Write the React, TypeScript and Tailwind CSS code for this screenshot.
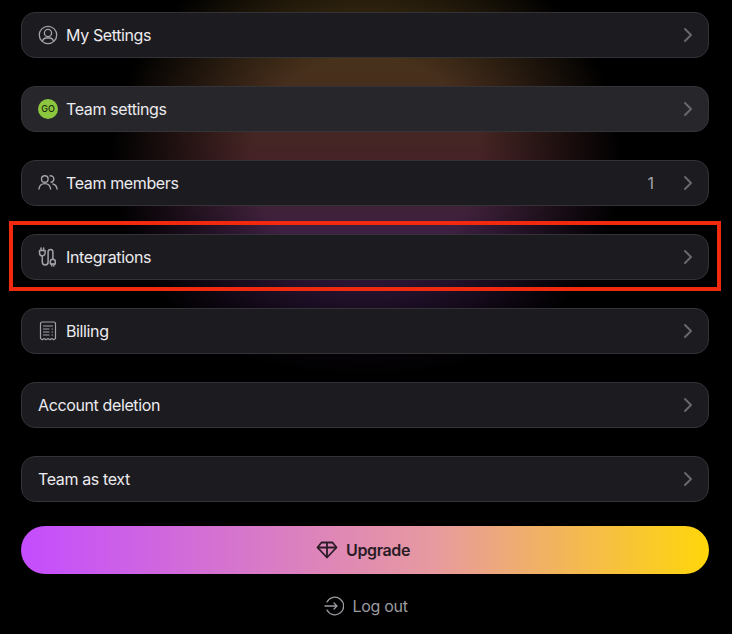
import type { ReactNode } from 'react';
import { ChevronRight } from 'lucide-react';

function UserIcon() {
  return (
    <svg width="20" height="20" viewBox="0 0 20 20" fill="none" stroke="currentColor" strokeWidth="1.3">
      <circle cx="10" cy="10" r="8.700" />
      <circle cx="10" cy="8" r="3.600" />
      <path d="M4.600 16.200c.5-2.200 2-3.200 3.400-3.200h4c1.400 0 2.900 1 3.400 3.200" />
    </svg>
  );
}

function MembersIcon() {
  return (
    <svg width="20" height="20" viewBox="0 0 20 20" fill="none" stroke="currentColor" strokeWidth="1.4" strokeLinecap="round">
      <circle cx="6.800" cy="6" r="3.300" />
      <path d="M1 16c.3-3.400 2.500-5.400 5.800-5.400s5.500 2 5.800 5.400" />
      <path d="M12 2.900c2-.4 3.800 1 3.800 3.100 0 1.700-1 2.900-2.600 3.300" />
      <path d="M14.800 11c2.400.5 3.900 2.300 4.200 5" />
    </svg>
  );
}

function PlugIcon() {
  return (
    <svg width="20" height="20" viewBox="0 0 20 20" fill="none" stroke="currentColor" strokeWidth="1.500" strokeLinecap="round" strokeLinejoin="round">
      <path d="M1.500 3.500v2.500a2.800 2.800 0 0 0 5.600 0V3.500z" />
      <path d="M3 1v2.500M5.600 1v2.500" />
      <path d="M4.300 9v6a2.900 2.900 0 0 0 5.800 0V4.800a2.400 2.400 0 0 1 4.800 0V12" />
      <path d="M12.300 17v-2.300a2.500 2.500 0 0 1 5 0V17z" />
      <path d="M13.800 17v2M15.900 17v2" />
    </svg>
  );
}

function ReceiptIcon() {
  return (
    <svg width="20" height="20" viewBox="0 0 20 20" fill="none" stroke="currentColor" strokeWidth="1.2" strokeLinecap="round" strokeLinejoin="round">
      <path d="M2.500 17.500V2.500A1.500 1.500 0 0 1 4 1h12a1.500 1.500 0 0 1 1.500 1.500v15l-1.900 1.200-1.800-1.200-1.900 1.200-1.900-1.200-1.900 1.200-1.900-1.200-1.800 1.200z" />
      <path d="M5.500 5h9M5.500 8h5.500M5.500 11h5.500M5.500 14h5.500M14 8h.5M14 11h.5M14 14h.5" />
    </svg>
  );
}

function Row({ icon, label, count, light }: { icon?: ReactNode; label: string; count?: string; light?: boolean }) {
  return (
    <div
      className={`flex h-[46px] items-center rounded-[14px] border border-[#333237] pl-4 pr-2 ${light ? 'bg-[#27262b]' : 'bg-[#1c1b20]'}`}
    >
      {icon && <span className="mr-[8px] flex w-5 justify-center text-[#a3a2a8]">{icon}</span>}
      <span className="text-[16px] tracking-[-0.38px] text-[#ecebef]">{label}</span>
      {count && <span className="ml-auto text-[16px] text-[#a3a2a8]">{count}</span>}
      <ChevronRight size={24} strokeWidth={2} className={`text-[#68676d] ${count ? 'ml-[22px]' : 'ml-auto'}`} />
    </div>
  );
}

export default function App() {
  return (
    <div className="relative h-[634px] w-[732px] overflow-hidden bg-black font-['Inter',sans-serif]">
      {/* glow behind the list */}
      <div className="absolute left-[110px] top-[-70px] h-[460px] w-[512px] bg-[linear-gradient(180deg,#463610_0%,#483419_25%,#452226_50%,#3c2046_68%,#261233_85%,#000000_100%)] [mask-image:radial-gradient(ellipse_50%_50%_at_50%_50%,#000_45%,transparent_100%)]" />

      <div className="relative flex flex-col gap-7 pl-[21px] pr-[23px] pt-3">
        <Row icon={<UserIcon />} label="My Settings" />
        <Row
          light
          icon={
            <span className="flex h-5 w-5 items-center justify-center rounded-full bg-[#8cc63f] text-[9px] font-medium text-[#1c2a10]">
              GO
            </span>
          }
          label="Team settings"
        />
        <Row icon={<MembersIcon />} label="Team members" count="1" />
        <Row icon={<PlugIcon />} label="Integrations" />
        <Row icon={<ReceiptIcon />} label="Billing" />
        <Row label="Account deletion" />
        <Row label="Team as text" />
      </div>

      <div className="relative ml-[21px] mr-[23px] mt-6 flex h-12 items-center justify-center gap-2 rounded-full bg-[linear-gradient(90deg,#c44dff_0%,#e79a9f_60%,#ffd60a_100%)] pr-1">
        <svg width="22" height="18" viewBox="0 0 22 18" fill="none" stroke="#2a1c26" strokeWidth="1.800" strokeLinejoin="round">
          <path d="M5.500 1.500h11l4 5L11 16.500 1.500 6.500z" />
          <path d="M1.500 6.500h19M11 1.500v15" />
        </svg>
        <span className="text-[16px] font-semibold tracking-[-0.38px] text-[#2a1c26]">Upgrade</span>
      </div>

      <div className="relative mt-[20px] flex items-center justify-center gap-2 text-[#9c9ba1]">
        <svg width="20" height="20" viewBox="0 0 20 20" fill="none" stroke="currentColor" strokeWidth="1.300" strokeLinecap="round" strokeLinejoin="round">
          <path d="M3 6a8.800 8.800 0 1 1 0 8" />
          <path d="M1 10h12M10 7l3 3-3 3" />
        </svg>
        <span className="text-[16px] tracking-[-0.3px]">Log out</span>
      </div>

      {/* annotation box */}
      <div className="absolute left-[9px] top-[221px] h-[70px] w-[712px] border-4 border-[#f0290f]" />
    </div>
  );
}
